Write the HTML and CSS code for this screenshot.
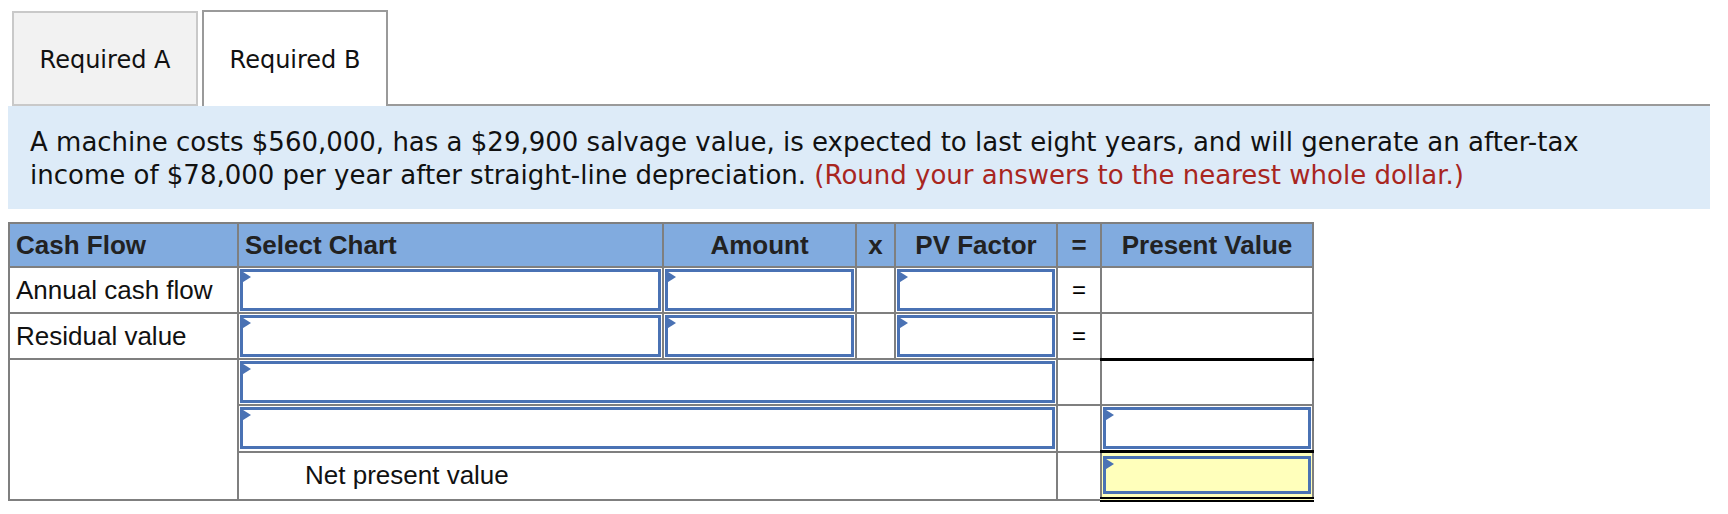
FILE: index.html
```html
<!DOCTYPE html>
<html>
<head>
<meta charset="utf-8">
<link rel="stylesheet" href="styles.css">
</head>
<body>
<div class="tabs">
  <div class="tab tab-inactive">Required A</div>
  <div class="tab tab-active">Required B</div>
  <div class="tab-fill"></div>
</div>
<div class="panel">
  <p class="question">A machine costs $560,000, has a $29,900 salvage value, is expected to last eight years, and will generate an after-tax income of $78,000 per year after straight-line depreciation. <span class="hint">(Round your answers to the nearest whole dollar.)</span></p>
</div>
<table class="grid">
  <colgroup>
    <col class="c-flow">
    <col class="c-chart">
    <col class="c-amount">
    <col class="c-x">
    <col class="c-pvf">
    <col class="c-eq">
    <col class="c-pv">
  </colgroup>
  <thead>
    <tr>
      <th class="left">Cash Flow</th>
      <th class="left">Select Chart</th>
      <th>Amount</th>
      <th>x</th>
      <th>PV Factor</th>
      <th>=</th>
      <th>Present Value</th>
    </tr>
  </thead>
  <tbody>
    <tr>
      <td class="label">Annual cash flow</td>
      <td class="in"><div class="inp"><span class="tri"></span></div></td>
      <td class="in"><div class="inp"><span class="tri"></span></div></td>
      <td></td>
      <td class="in"><div class="inp"><span class="tri"></span></div></td>
      <td class="eq">=</td>
      <td></td>
    </tr>
    <tr>
      <td class="label">Residual value</td>
      <td class="in"><div class="inp"><span class="tri"></span></div></td>
      <td class="in"><div class="inp"><span class="tri"></span></div></td>
      <td></td>
      <td class="in"><div class="inp"><span class="tri"></span></div></td>
      <td class="eq">=</td>
      <td class="under"></td>
    </tr>
    <tr>
      <td rowspan="3"></td>
      <td class="in" colspan="4"><div class="inp"><span class="tri"></span></div></td>
      <td></td>
      <td></td>
    </tr>
    <tr>
      <td class="in" colspan="4"><div class="inp"><span class="tri"></span></div></td>
      <td></td>
      <td class="in under"><div class="inp"><span class="tri"></span></div></td>
    </tr>
    <tr>
      <td class="npv" colspan="4">Net present value</td>
      <td></td>
      <td class="in total"><div class="inp yellow"><span class="tri"></span></div></td>
    </tr>
  </tbody>
</table>
</body>
</html>
```
FILE: styles.css
```css
body {
  margin: 8px;
  background: #ffffff;
}

.tabs {
  display: flex;
  align-items: flex-end;
  height: 96px;
  margin-top: 2px;
  width: 1702px;
}

.tab {
  box-sizing: border-box;
  width: 186px;
  height: 96px;
  display: flex;
  align-items: center;
  justify-content: center;
  font-family: "DejaVu Sans", Verdana, sans-serif;
  font-size: 24px;
  color: #111;
  padding-top: 2px;
}

.tab-inactive {
  margin-left: 4px;
  background: #f2f2f2;
  border: 2px solid #c9c9c9;
  height: 95px;
}

.tab-active {
  margin-left: 4px;
  background: #ffffff;
  border: 2px solid #9a9a9a;
  border-bottom: none;
}

.tab-fill {
  flex: 1;
  border-bottom: 2px solid #9a9a9a;
}

.panel {
  width: 1702px;
  box-sizing: border-box;
  height: 103px;
  background: #ddebf8;
  padding: 20px 80px 0 22px;
}

.question {
  margin: 0;
  font-family: "DejaVu Sans", Verdana, sans-serif;
  font-size: 26px;
  line-height: 33px;
  color: #111;
}

.hint {
  color: #a8261f;
}

.grid {
  margin-top: 13px;
  border-collapse: collapse;
  table-layout: fixed;
  width: 1305px;
  font-family: "Liberation Sans", Arial, sans-serif;
  border: 2px solid #7f7f7f;
}

.c-flow { width: 229px; }
.c-chart { width: 425px; }
.c-amount { width: 193px; }
.c-x { width: 39px; }
.c-pvf { width: 162px; }
.c-eq { width: 44px; }
.c-pv { width: 212px; }

.grid th,
.grid td {
  border: 2px solid #7f7f7f;
  height: 42px;
  padding: 0;
}

.grid th {
  background: #81abdf;
  color: #222;
  font-weight: bold;
  font-size: 26px;
  text-align: center;
}

.grid th.left {
  text-align: left;
  padding-left: 6px;
}

.grid td.label {
  font-size: 26px;
  padding-left: 6px;
  color: #111;
}

.grid td.eq {
  text-align: center;
  font-size: 24px;
}

.grid td.in {
  padding: 1px;
}

.inp {
  position: relative;
  box-sizing: border-box;
  height: 42px;
  border: 3px solid #4a72b4;
  background: #ffffff;
}

.inp.yellow {
  background: #ffffbb;
  height: 38px;
}

.tri {
  position: absolute;
  left: -3px;
  top: -2px;
  width: 0;
  height: 0;
  border-top: 7px solid transparent;
  border-bottom: 7px solid transparent;
  border-left: 11px solid #4a72b4;
}

.grid td.under {
  border-bottom: 3px solid #000000;
}

.grid td.npv {
  font-size: 26px;
  padding-left: 66px;
  color: #111;
}

.grid td.total {
  border-bottom: 5px double #000000;
  background: #ffffbb;
}
```
